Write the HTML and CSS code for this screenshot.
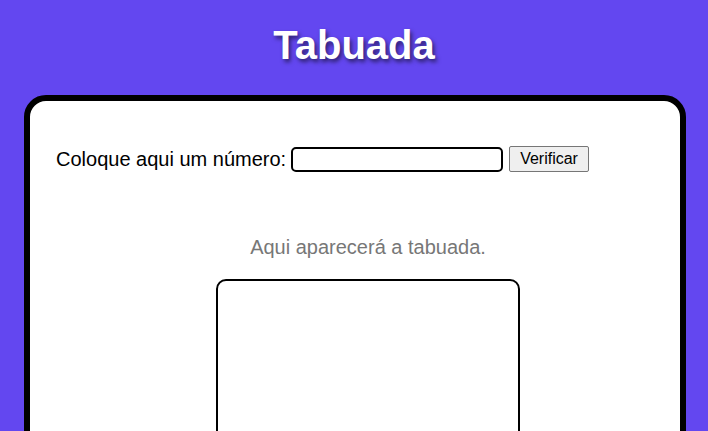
FILE: index.html
```html
<!DOCTYPE html>
<html lang="pt-BR">
<head>
<meta charset="UTF-8">
<title>Tabuada</title>
<link rel="stylesheet" href="styles.css">
</head>
<body>
<header class="header">
  <h1 class="title">Tabuada</h1>
</header>
<main class="card">
  <div class="form-row">
    <label class="label" for="num">Coloque aqui um número:</label>
    <input class="num-input" type="number" id="num">
    <button class="btn" type="button">Verificar</button>
  </div>
  <div class="result">
    <p class="hint">Aqui aparecerá a tabuada.</p>
    <div class="result-box"></div>
  </div>
</main>
</body>
</html>
```

FILE: styles.css
```css
html, body {
  margin: 0;
  padding: 0;
}
body {
  background: #6347f0;
  font-family: "Liberation Sans", Arial, sans-serif;
  overflow: hidden;
  height: 431px;
}
.header {
  padding: 22px 0 27px;
}
.title {
  margin: 0;
  text-align: center;
  color: #ffffff;
  font-size: 40px;
  line-height: 46px;
  font-weight: bold;
  text-shadow: 2px 3px 4px rgba(0, 0, 0, 0.55);
}
.card {
  margin: 0 22px 0 24px;
  background: #ffffff;
  border: 6px solid #000000;
  border-radius: 22px;
  padding: 45px 0 0 26px;
  height: 400px;
}
.form-row {
  display: flex;
  align-items: center;
  height: 26px;
}
.label {
  font-size: 20px;
  line-height: 23px;
  color: #000;
  margin-right: 5px;
}
.num-input {
  box-sizing: border-box;
  width: 212px;
  height: 25px;
  border: 2px solid #000;
  border-radius: 5px;
  padding: 1px 4px;
  font-size: 16px;
  font-family: "Liberation Sans", Arial, sans-serif;
  outline: none;
  margin: 0 6px 0 0;
}
.btn {
  box-sizing: border-box;
  height: 26px;
  padding: 0 10px;
  font-size: 16px;
  font-family: "Liberation Sans", Arial, sans-serif;
  background: #efefef;
  border: 1px solid #767676;
  border-radius: 2px;
  color: #000;
  margin: 0;
}
.result {
  display: flex;
  flex-direction: column;
  align-items: center;
  padding-top: 64px;
}
.hint {
  margin: 0;
  font-size: 20px;
  line-height: 23px;
  color: #777777;
}
.result-box {
  margin-top: 20px;
  box-sizing: border-box;
  width: 304px;
  height: 200px;
  border: 2px solid #000;
  border-radius: 10px;
}
```
